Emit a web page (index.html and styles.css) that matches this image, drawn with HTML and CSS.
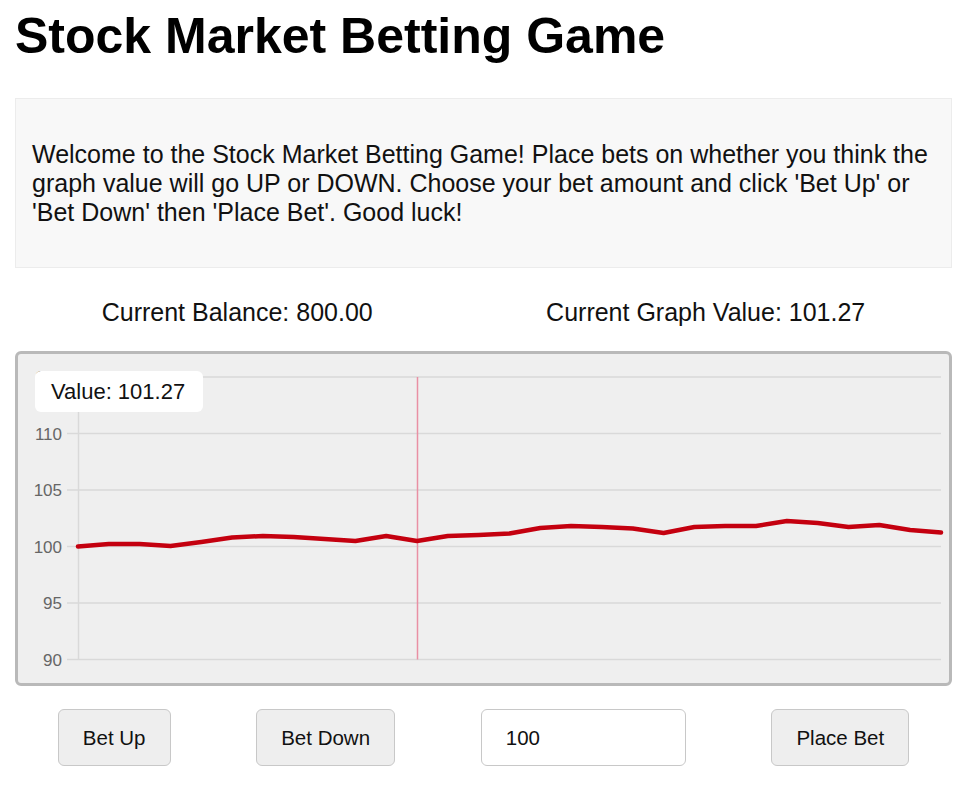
FILE: index.html
```html
<!DOCTYPE html>
<html>
<head>
<meta charset="utf-8">
<title>Stock Market Betting Game</title>
<link rel="stylesheet" href="styles.css">
</head>
<body>
<div class="container">
  <h1 class="title">Stock Market Betting Game</h1>
  <div class="info">
    <p>Welcome to the Stock Market Betting Game! Place bets on whether you think the graph value will go UP or DOWN. Choose your bet amount and click 'Bet Up' or 'Bet Down' then 'Place Bet'. Good luck!</p>
  </div>
  <div class="stats">
    <div class="stat">Current Balance: 800.00</div>
    <div class="stat">Current Graph Value: 101.27</div>
  </div>
  <div class="chart">
    <svg class="chart-svg" width="931" height="329" viewBox="0 0 931 329">
      <g class="grid">
        <line x1="49" y1="23" x2="923" y2="23"/>
        <line x1="49" y1="79.5" x2="923" y2="79.5"/>
        <line x1="49" y1="136" x2="923" y2="136"/>
        <line x1="49" y1="192.5" x2="923" y2="192.5"/>
        <line x1="49" y1="249" x2="923" y2="249"/>
        <line x1="49" y1="305.5" x2="923" y2="305.5"/>
        <line x1="60.5" y1="23" x2="60.5" y2="305.5"/>
      </g>
      <g class="labels">
        <text x="44" y="29">115</text>
        <text x="44" y="85.5">110</text>
        <text x="44" y="142">105</text>
        <text x="44" y="198.5">100</text>
        <text x="44" y="255">95</text>
        <text x="44" y="311.5">90</text>
      </g>
      <line class="hover" x1="399.5" y1="23" x2="399.5" y2="305.5"/>
      <polyline class="series" points="60,192.5 90.8,190 121.6,190 152.5,192 183.3,188 214.1,183.5 244.9,182 275.7,183 306.6,185 337.4,187 368.2,182 399,187 429.8,182 460.7,181 491.5,179.5 522.3,174 553.1,172 583.9,173 614.8,174.5 645.6,179 676.4,173 707.2,172 738,172 768.9,167 799.7,169 830.5,173 861.3,171 892.1,176 923,178.5"/>
    </svg>
    <div class="tooltip">Value: 101.27</div>
  </div>
  <div class="controls">
    <button class="btn">Bet Up</button>
    <button class="btn">Bet Down</button>
    <input class="amount" type="text" value="100">
    <button class="btn">Place Bet</button>
  </div>
</div>
</body>
</html>
```
FILE: styles.css
```css
html, body {
  margin: 0;
  padding: 0;
  background: #ffffff;
}
body {
  font-family: "Liberation Sans", Arial, sans-serif;
  color: #000;
}
.container {
  width: 937px;
  margin-left: 15px;
  padding-top: 8px;
}
.title {
  font-size: 50px;
  font-weight: bold;
  line-height: 57.5px;
  margin: 0 0 32.5px 0;
}
.info {
  background: #f8f8f8;
  border: 1px solid #ececec;
  padding: 16px;
}
.info p {
  margin: 25px 0;
  font-size: 25px;
  line-height: 28.75px;
  color: #111;
}
.stats {
  display: flex;
  justify-content: space-around;
  margin: 30px 0 24.25px;
  font-size: 25px;
  line-height: 28.75px;
  color: #111;
}
.chart {
  position: relative;
  height: 329px;
  background: #efefef;
  border: 3px solid #b9b9b9;
  border-radius: 6px;
}
.chart-svg {
  display: block;
}
.grid line {
  stroke: #d9d9d9;
  stroke-width: 1.5;
}
.labels text {
  font-family: "Liberation Sans", Arial, sans-serif;
  font-size: 17px;
  fill: #666;
  text-anchor: end;
}
.hover {
  stroke: #e990a4;
  stroke-width: 1.5;
}
.series {
  fill: none;
  stroke: #c4000f;
  stroke-width: 4.5;
  stroke-linejoin: round;
  stroke-linecap: round;
}
.tooltip {
  position: absolute;
  left: 17px;
  top: 17px;
  width: 168px;
  height: 41px;
  box-sizing: border-box;
  padding-left: 16px;
  background: #ffffff;
  border-radius: 6px;
  font-size: 22px;
  line-height: 41px;
  color: #111;
}
.controls {
  display: flex;
  justify-content: space-around;
  align-items: center;
  margin-top: 23px;
}
.btn {
  font-family: "Liberation Sans", Arial, sans-serif;
  font-size: 20.5px;
  line-height: 23px;
  padding: 16px 24px;
  background: #eeeeee;
  border: 1px solid #c8c8c8;
  border-radius: 6px;
  color: #111;
  margin: 0;
}
.amount {
  font-family: "Liberation Sans", Arial, sans-serif;
  font-size: 20.5px;
  line-height: 23px;
  width: 205px;
  height: 57px;
  box-sizing: border-box;
  padding: 0 12px 0 24px;
  background: #fff;
  border: 1px solid #c8c8c8;
  border-radius: 6px;
  color: #111;
  margin: 0;
}
```
